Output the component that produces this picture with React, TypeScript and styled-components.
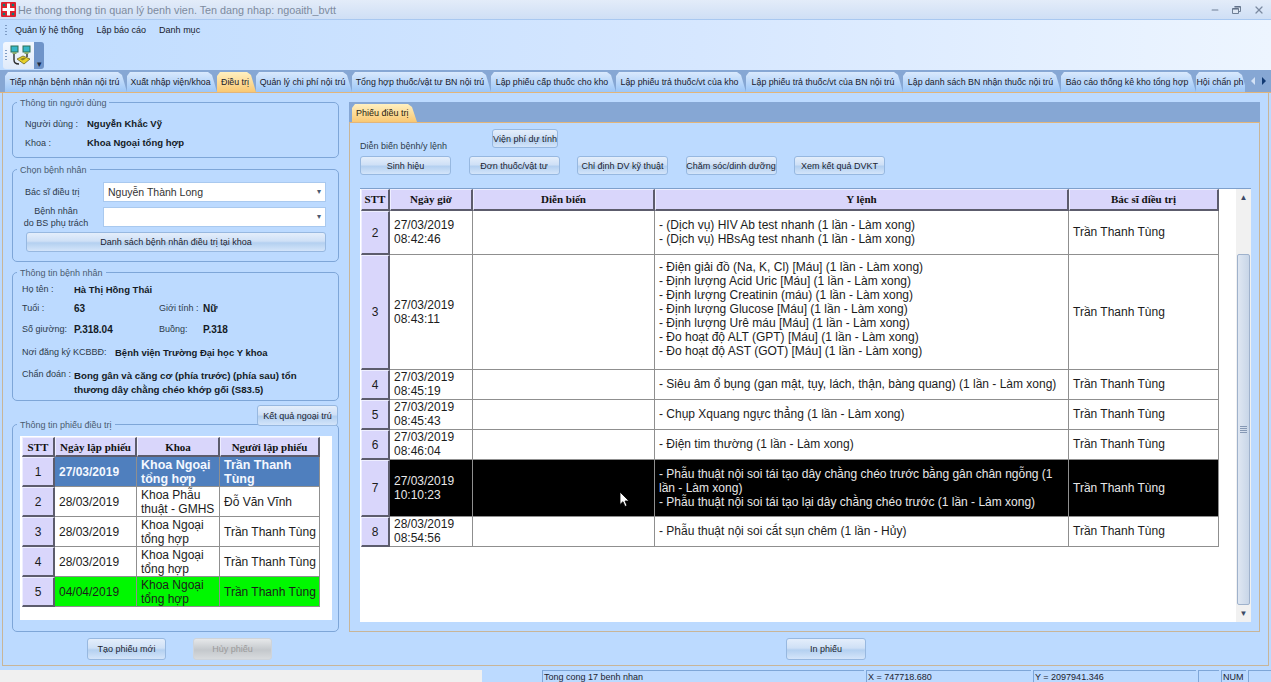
import React from 'react';
import styled, { createGlobalStyle } from 'styled-components';
import { Minus, X } from 'lucide-react';

const GlobalStyle = createGlobalStyle`
  html, body {
    margin: 0;
    padding: 0;
    background: #f0f0f0;
  }
  * { box-sizing: border-box; }
  #root {
    width: 1271px;
    height: 682px;
    overflow: hidden;
    font-family: "Liberation Sans", Arial, sans-serif;
    color: #1c2430;
  }
`;

const tabs = [
  { label: 'Tiếp nhận bệnh nhân nội trú', width: 122 },
  { label: 'Xuất nhập viện/khoa', width: 90 },
  { label: 'Điều trị', width: 39, active: true },
  { label: 'Quản lý chi phí nội trú', width: 96 },
  { label: 'Tổng hợp thuốc/vật tư BN nội trú', width: 139 },
  { label: 'Lập phiếu cấp thuốc cho kho', width: 125 },
  { label: 'Lập phiếu trả thuốc/vt của kho', width: 130 },
  { label: 'Lập phiếu trả thuốc/vt của BN nội trú', width: 157 },
  { label: 'Lập danh sách BN nhận thuốc nội trú', width: 158 },
  { label: 'Báo cáo thống kê kho tổng hợp', width: 135 },
  { label: 'Hội chẩn ph', width: 51 },
];

const phieuRows = [
  { stt: 1, date: '27/03/2019', khoa: ['Khoa Ngoại', 'tổng hợp'], nguoi: 'Trần Thanh Tùng', tone: 'selected' },
  { stt: 2, date: '28/03/2019', khoa: ['Khoa Phẫu', 'thuật - GMHS'], nguoi: 'Đỗ Văn Vĩnh', tone: 'plain' },
  { stt: 3, date: '28/03/2019', khoa: ['Khoa Ngoại', 'tổng hợp'], nguoi: 'Trần Thanh Tùng', tone: 'plain' },
  { stt: 4, date: '28/03/2019', khoa: ['Khoa Ngoại', 'tổng hợp'], nguoi: 'Trần Thanh Tùng', tone: 'plain' },
  { stt: 5, date: '04/04/2019', khoa: ['Khoa Ngoại', 'tổng hợp'], nguoi: 'Trần Thanh Tùng', tone: 'green' },
];

const dieuTriRows = [
  {
    stt: 2, height: 44, date: '27/03/2019', time: '08:42:46', tone: 'plain',
    orders: ['- (Dịch vụ) HIV Ab test nhanh (1 lần - Làm xong)', '- (Dịch vụ) HBsAg test nhanh (1 lần - Làm xong)'],
  },
  {
    stt: 3, height: 115, date: '27/03/2019', time: '08:43:11', tone: 'plain',
    orders: [
      '- Điện giải đồ (Na, K, Cl) [Máu] (1 lần - Làm xong)',
      '- Định lượng Acid Uric [Máu] (1 lần - Làm xong)',
      '- Định lượng Creatinin (máu) (1 lần - Làm xong)',
      '- Định lượng Glucose [Máu] (1 lần - Làm xong)',
      '- Định lượng Urê máu [Máu] (1 lần - Làm xong)',
      '- Đo hoạt độ ALT (GPT) [Máu] (1 lần - Làm xong)',
      '- Đo hoạt độ AST (GOT) [Máu] (1 lần - Làm xong)',
    ],
  },
  {
    stt: 4, height: 30, date: '27/03/2019', time: '08:45:19', tone: 'plain',
    orders: ['- Siêu âm ổ bụng (gan mật, tụy, lách, thận, bàng quang) (1 lần - Làm xong)'],
  },
  { stt: 5, height: 30, date: '27/03/2019', time: '08:45:43', tone: 'plain', orders: ['- Chụp Xquang ngực thẳng (1 lần - Làm xong)'] },
  { stt: 6, height: 30, date: '27/03/2019', time: '08:46:04', tone: 'plain', orders: ['- Điện tim thường (1 lần - Làm xong)'] },
  {
    stt: 7, height: 57, date: '27/03/2019', time: '10:10:23', tone: 'dark',
    orders: [
      '- Phẫu thuật nội soi tái tạo dây chằng chéo trước bằng gân chân ngỗng (1',
      'lần - Làm xong)',
      '- Phẫu thuật nội soi tái tạo lại dây chằng chéo trước (1 lần - Làm xong)',
    ],
  },
  { stt: 8, height: 30, date: '28/03/2019', time: '08:54:56', tone: 'plain', orders: ['- Phẫu thuật nội soi cắt sụn chêm (1 lần - Hủy)'] },
];

const orderButtons = ['Sinh hiệu', 'Đơn thuốc/vật tư', 'Chỉ định DV kỹ thuật', 'Chăm sóc/dinh dưỡng', 'Xem kết quả DVKT'];

const AppIcon = () => (
  <svg width="15" height="15" viewBox="0 0 15 15">
    <rect width="15" height="15" rx="1" fill="#e01f2d" />
    <path d="M6 1.5h3v4.5h4.500v3H9v4.500H6V9H1.500V6H6z" fill="#fff" />
    <circle cx="3" cy="3" r="1.300" fill="#0d7f78" />
    <circle cx="12" cy="3" r="1.300" fill="#0d7f78" />
    <circle cx="3" cy="12" r="1.300" fill="#0d7f78" />
    <circle cx="12" cy="12" r="1.300" fill="#0d7f78" />
  </svg>
);

const RestoreIcon = () => (
  <svg width="9" height="8" viewBox="0 0 9 8">
    <path d="M2.500.5h6v5h-2M.5 2.500h6v5h-6z" fill="#dfe8f4" stroke="#6f7f95" />
    <path d="M.5 3h6M2.500 1h6" stroke="#55657c" />
  </svg>
);

const NetworkIcon = () => (
  <svg width="22" height="22" viewBox="0 0 22 22">
    <rect x="1" y="1" width="7" height="6" fill="#35b6c8" stroke="#2c6f55" />
    <rect x="13" y="1" width="7" height="6" fill="#35b6c8" stroke="#2c6f55" />
    <rect x="2.500" y="7" width="4" height="2" fill="#87a86b" />
    <rect x="14.500" y="7" width="4" height="2" fill="#87a86b" />
    <path d="M4 9v6c0 3 2 4 5 4M17 9v3" fill="none" stroke="#2b2b2b" strokeWidth="1.400" />
    <path d="M7 14l6-3 7 3-6 5z" fill="#e8d12a" stroke="#6a6320" strokeWidth=".8" />
    <path d="M10 14l4-1.500 2 1-3.500 2z" fill="#8f8620" />
  </svg>
);

const CursorIcon = () => (
  <svg width="11" height="17" viewBox="0 0 11 17">
    <path d="M1 1v12.500l3-2.800 2 4.800 2-.9-2-4.600h4z" fill="#fff" stroke="#000" strokeWidth=".8" />
  </svg>
);

export default function App() {
  return (
    <>
      <GlobalStyle />
      <Window>
        <TitleBar>
          <AppIcon />
          <TitleText>He thong thong tin quan lý benh vien. Ten dang nhap: ngoaith_bvtt</TitleText>
          <WindowControls>
            <Minus size={10} strokeWidth={2.5} color="#6f7f95" />
            <RestoreIcon />
            <X size={12} strokeWidth={2.5} color="#7b8aa0" />
          </WindowControls>
        </TitleBar>

        <MenuBar>
          <MenuGrip />
          <MenuItem>Quản lý hệ thống</MenuItem>
          <MenuItem>Lập báo cáo</MenuItem>
          <MenuItem>Danh mục</MenuItem>
        </MenuBar>

        <ToolBar>
          <ToolGroup>
            <Grip />
            <NetworkIcon />
          </ToolGroup>
          <ToolOverflow>▾</ToolOverflow>
        </ToolBar>

        <TabStrip>
          {tabs.map((tab) => (
            <Tab key={tab.label} $width={tab.width} $active={!!tab.active}>{tab.label}</Tab>
          ))}
          <TabArrows>
            <TabArrow $dim />
            <TabArrow $right />
          </TabArrows>
        </TabStrip>

        <Main>
          <LeftColumn>
            <Group $height={56} $after={11}>
              <Legend>Thông tin người dùng</Legend>
              <UserGrid>
                <Label>Người dùng :</Label>
                <Value>Nguyễn Khắc Vỹ</Value>
                <Label>Khoa :</Label>
                <Value>Khoa Ngoại tổng hợp</Value>
              </UserGrid>
            </Group>

            <Group $height={93} $after={10}>
              <Legend>Chọn bệnh nhân</Legend>
              <PickGrid>
                <Label>Bác sĩ điều trị</Label>
                <Select>Nguyễn Thành Long<SelectCaret>▾</SelectCaret></Select>
                <StackedLabel>Bệnh nhân<br />do BS phụ trách</StackedLabel>
                <Select><SelectCaret>▾</SelectCaret></Select>
                <WideButton>Danh sách bệnh nhân điều trị tại khoa</WideButton>
              </PickGrid>
            </Group>

            <Group $height={129} $after={4}>
              <Legend>Thông tin bệnh nhân</Legend>
              <PatientInfo>
                <InfoRow $top={0}><InfoLabel>Họ tên :</InfoLabel><Value>Hà Thị Hồng Thái</Value></InfoRow>
                <InfoRow $top={7}>
                  <InfoLabel>Tuổi :</InfoLabel><InfoShort>63</InfoShort>
                  <InfoLabelShort>Giới tính :</InfoLabelShort><InfoShort>Nữ</InfoShort>
                </InfoRow>
                <InfoRow $top={9}>
                  <InfoLabel>Số giường:</InfoLabel><InfoShort>P.318.04</InfoShort>
                  <InfoLabelShort>Buồng:</InfoLabelShort><InfoShort>P.318</InfoShort>
                </InfoRow>
                <InfoRow $top={11}>
                  <RegisterLabel>Nơi đăng ký KCBBĐ:</RegisterLabel><Value>Bệnh viện Trường Đại học Y khoa</Value>
                </InfoRow>
                <DiagnosisRow>
                  <InfoLabel>Chẩn đoán :</InfoLabel>
                  <DiagnosisText>Bong gân và căng cơ (phía trước) (phía sau) tổn thương dây chằng chéo khớp gối (S83.5)</DiagnosisText>
                </DiagnosisRow>
              </PatientInfo>
            </Group>

            <OutpatientSlot>
              <ActionButton $width={81} $height={21}>Kết quả ngoại trú</ActionButton>
            </OutpatientSlot>

            <Group $height={208} $after={6}>
              <Legend>Thông tin phiếu điều trị</Legend>
              <PhieuBox>
                <GridTable>
                  <colgroup>
                    <col width={33} /><col width={82} /><col width={83} /><col width={100} />
                  </colgroup>
                  <thead>
                    <tr>
                      <HeaderCell $height={20}>STT</HeaderCell>
                      <HeaderCell $height={20}>Ngày lập phiếu</HeaderCell>
                      <HeaderCell $height={20}>Khoa</HeaderCell>
                      <HeaderCell $height={20}>Người lập phiếu</HeaderCell>
                    </tr>
                  </thead>
                  <tbody>
                    {phieuRows.map((row) => (
                      <tr key={row.stt}>
                        <RowHead $height={30}>{row.stt}</RowHead>
                        <BodyCell $tone={row.tone} $bold={row.tone === 'selected'}>{row.date}</BodyCell>
                        <BodyCell $tone={row.tone} $bold={row.tone === 'selected'}>
                          <TightLines $big={row.tone === 'selected'}>{row.khoa[0]}<br />{row.khoa[1]}</TightLines>
                        </BodyCell>
                        <BodyCell $tone={row.tone} $bold={row.tone === 'selected'}>
                          <TightLines $big={row.tone === 'selected'}>{row.nguoi}</TightLines>
                        </BodyCell>
                      </tr>
                    ))}
                  </tbody>
                </GridTable>
              </PhieuBox>
            </Group>

            <LeftActions>
              <ActionButton $width={79} $height={22}>Tạo phiếu mới</ActionButton>
              <ActionButton $width={79} $height={22} $disabled>Hủy phiếu</ActionButton>
            </LeftActions>
          </LeftColumn>

          <RightColumn>
            <SheetTabs>
              <SheetTab>Phiếu điều trị</SheetTab>
            </SheetTabs>
            <SheetBody>
              <SheetHead>
                <SheetCaption>Diễn biến bệnh/y lệnh</SheetCaption>
                <ActionButton $width={66} $height={19}>Viện phí dự tính</ActionButton>
              </SheetHead>
              <OrderButtons>
                {orderButtons.map((label) => (
                  <ActionButton key={label} $width={91} $height={19}>{label}</ActionButton>
                ))}
              </OrderButtons>
              <TableFrame>
                <TableScroll>
                  <GridTable>
                    <colgroup>
                      <col width={29} /><col width={83} /><col width={182} /><col width={414} /><col width={150} />
                    </colgroup>
                    <thead>
                      <tr>
                        <SheetHeader $height={22}>STT</SheetHeader>
                        <SheetHeader $height={22}>Ngày giờ</SheetHeader>
                        <SheetHeader $height={22}>Diễn biến</SheetHeader>
                        <SheetHeader $height={22}>Y lệnh</SheetHeader>
                        <SheetHeader $height={22}>Bác sĩ điều trị</SheetHeader>
                      </tr>
                    </thead>
                    <tbody>
                      {dieuTriRows.map((row) => (
                        <tr key={row.stt}>
                          <RowHead $height={row.height}>{row.stt}</RowHead>
                          <SheetCell $tone={row.tone}>{row.date}<br />{row.time}</SheetCell>
                          <SheetCell $tone={row.tone} />
                          <SheetCell $tone={row.tone}>
                            <OrderBlock $long={row.orders.length > 5}>
                              {row.orders.map((line) => <OrderLine key={line}>{line}</OrderLine>)}
                            </OrderBlock>
                          </SheetCell>
                          <SheetCell $tone={row.tone}>Trần Thanh Tùng</SheetCell>
                        </tr>
                      ))}
                    </tbody>
                  </GridTable>
                  <Pointer><CursorIcon /></Pointer>
                </TableScroll>
                <ScrollBar>
                  <ScrollArrow>▲</ScrollArrow>
                  <ScrollSpace />
                  <ScrollThumb><ThumbGrip /></ScrollThumb>
                  <ScrollArrow>▼</ScrollArrow>
                </ScrollBar>
              </TableFrame>
            </SheetBody>
            <RightActions>
              <ActionButton $width={80} $height={22}>In phiếu</ActionButton>
            </RightActions>
          </RightColumn>
        </Main>

        <BottomStrip>
          <StatusGap />
          <StatusBar>
            <StatusCell $width={322}>Tong cong 17 benh nhan</StatusCell>
            <StatusCell $width={165}>X = 747718.680</StatusCell>
            <StatusCell $width={163}>Y = 2097941.346</StatusCell>
            <StatusCell $width={21} />
            <StatusCell $width={25}>NUM</StatusCell>
            <StatusCell $width={24} />
          </StatusBar>
        </BottomStrip>
      </Window>
    </>
  );
}

const Window = styled.div`
  width: 1271px;
  height: 682px;
  display: flex;
  flex-direction: column;
  background: #bcdaff;
`;

const TitleBar = styled.div`
  height: 20px;
  display: flex;
  align-items: center;
  padding: 0 6px 0 1px;
  gap: 2px;
  background: linear-gradient(#e3ecf9, #cfdff5);
  border-bottom: 1px solid #a9c8f0;
`;

const TitleText = styled.span`
  font-size: 10.800px;
  color: #7d8b9e;
`;

const WindowControls = styled.div`
  margin-left: auto;
  display: flex;
  align-items: center;
  gap: 12px;
`;

const MenuBar = styled.div`
  height: 20px;
  display: flex;
  align-items: center;
  padding-left: 5px;
  gap: 13px;
  background: linear-gradient(90deg, #bfdcff 0%, #d6e7ff 55%, #edf5ff 100%);
`;

const Grip = styled.span`
  width: 2px;
  height: 11px;
  margin-right: 2px;
  background: repeating-linear-gradient(#7f9cc4 0 1px, transparent 1px 3px);
`;

const MenuGrip = styled(Grip)`
  margin-right: -5px;
`;

const MenuItem = styled.span`
  font-size: 9px;
  color: #18202c;
`;

const ToolBar = styled.div`
  height: 30px;
  display: flex;
  align-items: flex-start;
  padding: 2px 0 0 3px;
  background: linear-gradient(90deg, #bfdcff 0%, #d6e7ff 55%, #edf5ff 100%);
`;

const ToolGroup = styled.div`
  width: 31px;
  height: 27px;
  display: flex;
  align-items: center;
  padding-left: 2px;
  gap: 1px;
  background: linear-gradient(#f4f8fe, #dfeafa);
  border-radius: 3px 0 0 3px;
`;

const ToolOverflow = styled.div`
  width: 10px;
  height: 27px;
  display: flex;
  align-items: flex-end;
  justify-content: center;
  font-size: 9px;
  line-height: 10px;
  color: #1b2a40;
  background: #6f94c9;
  border-radius: 0 3px 3px 0;
`;

const TabStrip = styled.div`
  position: relative;
  height: 23px;
  display: flex;
  align-items: flex-end;
  padding-left: 5px;
  overflow: hidden;
  background: #86a7d4;
  border-bottom: 1px solid #e2b57a;
`;

const Tab = styled.div<{ $width: number; $active: boolean }>`
  flex: 0 0 ${(p) => p.$width}px;
  height: 20px;
  display: flex;
  align-items: center;
  justify-content: center;
  padding-right: 3px;
  font-size: 8.800px;
  white-space: nowrap;
  overflow: hidden;
  color: #18202c;
  clip-path: polygon(0 4px, 3px 0, calc(100% - 9px) 0, calc(100% - 5px) 3px, 100% 100%, 0 100%);
  background: ${(p) => (p.$active
    ? 'linear-gradient(#fff0c0, #f9c873)'
    : 'linear-gradient(#d9e9fd, #9cc6f7)')};
`;

const TabArrows = styled.div`
  position: absolute;
  top: 0;
  right: 0;
  width: 26px;
  height: 22px;
  display: flex;
  align-items: center;
  justify-content: center;
  gap: 7px;
  background: #86a7d4;
`;

const TabArrow = styled.span<{ $dim?: boolean; $right?: boolean }>`
  width: 0;
  height: 0;
  border-top: 4px solid transparent;
  border-bottom: 4px solid transparent;
  ${(p) => (p.$right
    ? 'border-left: 4px solid #123a73;'
    : `border-right: 4px solid ${p.$dim ? '#d3e2f5' : '#123a73'};`)}
`;

const Main = styled.main`
  flex: 1;
  min-height: 0;
  display: flex;
  gap: 10px;
  margin-left: 2px;
  margin-right: 2px;
  padding: 9px 8px 0 9px;
  background: #bcdaff;
  border: 1px solid #c8b598;
  border-top: none;
`;

const LeftColumn = styled.div`
  width: 327px;
  flex: none;
  display: flex;
  flex-direction: column;
`;

const Group = styled.section<{ $height: number; $after: number }>`
  position: relative;
  height: ${(p) => p.$height}px;
  margin-bottom: ${(p) => p.$after}px;
  flex: none;
  border: 1px solid #7ea6d8;
  border-radius: 5px;
`;

const Legend = styled.span`
  position: absolute;
  top: -5px;
  left: 4px;
  padding: 0 3px;
  font-size: 9px;
  line-height: 10px;
  color: #4a5a70;
  background: #bcdaff;
`;

const Label = styled.span`
  font-size: 9px;
  color: #2e3a4b;
`;

const Value = styled.span`
  font-size: 9.500px;
  font-weight: 700;
  color: #141b26;
`;

const UserGrid = styled.div`
  display: grid;
  grid-template-columns: 62px 1fr;
  row-gap: 8px;
  align-items: center;
  padding: 15px 0 0 12px;
`;

const PickGrid = styled.div`
  display: grid;
  grid-template-columns: 78px 223px;
  grid-auto-rows: 20px;
  row-gap: 5px;
  align-items: center;
  padding: 12px 0 0 12px;
`;

const StackedLabel = styled.span`
  font-size: 9px;
  line-height: 12px;
  text-align: center;
  color: #2e3a4b;
  margin-left: -2px;
  width: 66px;
  white-space: nowrap;
`;

const Select = styled.div`
  position: relative;
  height: 20px;
  display: flex;
  align-items: center;
  padding-left: 4px;
  font-size: 10.500px;
  color: #333;
  background: #fff;
  border: 1px solid #a9c9ef;
`;

const SelectCaret = styled.span`
  position: absolute;
  right: 4px;
  top: 4px;
  font-size: 8px;
  color: #4a5a70;
`;

const ButtonBase = styled.button`
  display: flex;
  align-items: center;
  justify-content: center;
  padding: 0;
  font-family: inherit;
  font-size: 9px;
  white-space: nowrap;
  color: #1c2430;
  background: linear-gradient(#e4eefb 0%, #cfe0f6 45%, #b4d0f0 55%, #d4e5fa 100%);
  border: 1px solid #97b8e0;
  border-radius: 3px;
`;

const WideButton = styled(ButtonBase)`
  grid-column: 1 / -1;
  width: 300px;
  height: 20px;
  margin-left: 1px;
`;

const ActionButton = styled(ButtonBase)<{ $width: number; $height: number; $disabled?: boolean }>`
  flex: none;
  width: ${(p) => p.$width}px;
  height: ${(p) => p.$height}px;
  ${(p) => p.$disabled && `
    color: #9b9b9b;
    border-color: #cfd4da;
    background: linear-gradient(#e6e8ea, #c4c8cc 55%, #d8dbde);
  `}
`;

const PatientInfo = styled.div`
  padding: 10px 0 0 9px;
`;

const InfoRow = styled.div<{ $top: number }>`
  display: flex;
  align-items: center;
  height: 12px;
  margin-top: ${(p) => p.$top}px;
`;

const InfoLabel = styled(Label)`
  flex: 0 0 52px;
  white-space: nowrap;
`;

const InfoShort = styled(Value)`
  flex: 0 0 85px;
  font-size: 10px;
`;

const InfoLabelShort = styled(Label)`
  flex: 0 0 44px;
`;

const RegisterLabel = styled(Label)`
  flex: 0 0 93px;
  white-space: nowrap;
`;

const DiagnosisRow = styled.div`
  display: flex;
  margin-top: 11px;
`;

const DiagnosisText = styled(Value)`
  width: 242px;
  font-size: 9.700px;
  line-height: 14px;
`;

const OutpatientSlot = styled.div`
  display: flex;
  justify-content: flex-end;
  padding-right: 1px;
  height: 21px;
  margin-bottom: -2px;
  position: relative;
  z-index: 1;
`;

const PhieuBox = styled.div`
  margin: 11px 0 0 7px;
  width: 312px;
  height: 184px;
  padding: 1px 0 0 2px;
  background: #fff;
`;

const GridTable = styled.table`
  table-layout: fixed;
  border-collapse: separate;
  border-spacing: 0;
`;

const HeaderCell = styled.th<{ $height: number }>`
  height: ${(p) => p.$height}px;
  padding: 0;
  font-family: "Liberation Serif", "Times New Roman", serif;
  font-size: 11px;
  font-weight: 700;
  text-align: center;
  white-space: nowrap;
  color: #111;
  background: #d9d6fb;
  border-style: solid;
  border-width: 1px 2px 2px 1px;
  border-color: #eeeeff #5c5c6c #5c5c6c #eeeeff;
`;

const SheetHeader = styled(HeaderCell)`
  padding-bottom: 2px;
`;

const RowHead = styled.td<{ $height: number }>`
  height: ${(p) => p.$height}px;
  padding: 0;
  font-size: 12px;
  text-align: center;
  color: #1c1c1c;
  background: #d9d6fb;
  border-style: solid;
  border-width: 1px 2px 2px 1px;
  border-color: #eeeeff #5c5c6c #5c5c6c #eeeeff;
`;

const BodyCell = styled.td<{ $tone: string; $bold?: boolean }>`
  padding: 0 0 0 4px;
  font-size: 12px;
  line-height: 14px;
  white-space: nowrap;
  overflow: hidden;
  font-weight: ${(p) => (p.$bold ? 700 : 400)};
  color: ${(p) => (p.$tone === 'selected' ? '#f4f8ff' : p.$tone === 'dark' ? '#e8e8e8' : '#1c1c1c')};
  background: ${(p) => ({ selected: '#4f7fbe', green: '#00f800', dark: '#000', plain: '#fff' }[p.$tone])};
  border-right: 1px solid #8f8f8f;
  border-bottom: 1px solid #8f8f8f;
`;

const SheetCell = styled(BodyCell)`
  padding-bottom: 1px;
`;

const TightLines = styled.div<{ $big: boolean }>`
  line-height: 14px;
  white-space: ${(p) => (p.$big ? 'normal' : 'nowrap')};
  ${(p) => p.$big && 'font-size: 12.500px;'}
`;

const OrderBlock = styled.div<{ $long: boolean }>`
  ${(p) => p.$long && 'padding-bottom: 5px;'}
`;

const OrderLine = styled.div`
  white-space: nowrap;
`;

const LeftActions = styled.div`
  display: flex;
  gap: 27px;
  padding-left: 75px;
`;

const RightColumn = styled.div`
  width: 911px;
  flex: none;
  display: flex;
  flex-direction: column;
`;

const SheetTabs = styled.div`
  height: 20px;
  flex: none;
  display: flex;
  align-items: flex-end;
  padding-left: 3px;
  background: #86a7d4;
`;

const SheetTab = styled.div`
  width: 65px;
  height: 18px;
  display: flex;
  align-items: center;
  padding-left: 4px;
  font-size: 9px;
  color: #2b2410;
  clip-path: polygon(0 4px, 3px 0, calc(100% - 9px) 0, calc(100% - 5px) 3px, 100% 100%, 0 100%);
  background: linear-gradient(#fff0c0, #f9c873);
`;

const SheetBody = styled.div`
  height: 510px;
  flex: none;
  padding: 5px 0 0 10px;
  border: 1px solid #c8b598;
  border-top-color: #e2b57a;
`;

const SheetHead = styled.div`
  display: flex;
  align-items: flex-end;
  gap: 45px;
  height: 20px;
`;

const SheetCaption = styled.span`
  width: 87px;
  font-size: 9px;
  white-space: nowrap;
  margin-bottom: -3px;
  color: #2e3a4b;
`;

const OrderButtons = styled.div`
  display: flex;
  gap: 17.500px;
  margin-top: 8px;
`;

const TableFrame = styled.div`
  display: flex;
  width: 891px;
  height: 434px;
  margin-top: 13px;
  background: #fff;
  border-top: 1px solid #7ea0cc;
`;

const TableScroll = styled.div`
  position: relative;
  flex: 1;
  padding: 0 0 0 1px;
`;

const Pointer = styled.div`
  position: absolute;
  left: 259px;
  top: 302px;
  line-height: 0;
`;

const ScrollBar = styled.div`
  width: 15px;
  flex: none;
  display: flex;
  flex-direction: column;
  align-items: center;
  background: #f1f1f1;
`;

const ScrollArrow = styled.div`
  height: 17px;
  flex: none;
  display: flex;
  align-items: center;
  font-size: 8px;
  color: #3c4a66;
`;

const ScrollSpace = styled.div`
  height: 48px;
  flex: none;
`;

const ScrollThumb = styled.div`
  width: 13px;
  height: 351px;
  flex: none;
  display: flex;
  align-items: center;
  justify-content: center;
  border: 1px solid #9fb2cc;
  border-radius: 2px;
  background: linear-gradient(90deg, #dfe7f2, #c8d6e8);
`;

const ThumbGrip = styled.span`
  width: 7px;
  height: 7px;
  background: repeating-linear-gradient(#8598b4 0 1px, transparent 1px 2px);
`;

const RightActions = styled.div`
  display: flex;
  padding: 6px 0 0 437px;
`;

const BottomStrip = styled.div`
  height: 12px;
  flex: none;
  display: flex;
  margin-top: 4px;
  background: #f0f0f0;
`;

const StatusGap = styled.div`
  width: 482px;
  flex: none;
`;

const StatusBar = styled.div`
  flex: 1;
  display: flex;
  gap: 2px;
  padding-left: 60px;
  background: #bcdaff;
`;

const StatusCell = styled.div<{ $width: number }>`
  width: ${(p) => p.$width}px;
  flex: none;
  padding-left: 1px;
  font-size: 9px;
  line-height: 12px;
  white-space: nowrap;
  color: #1c2430;
  border-top: 1px solid #7ea6d8;
  border-left: 1px solid #7ea6d8;
`;
